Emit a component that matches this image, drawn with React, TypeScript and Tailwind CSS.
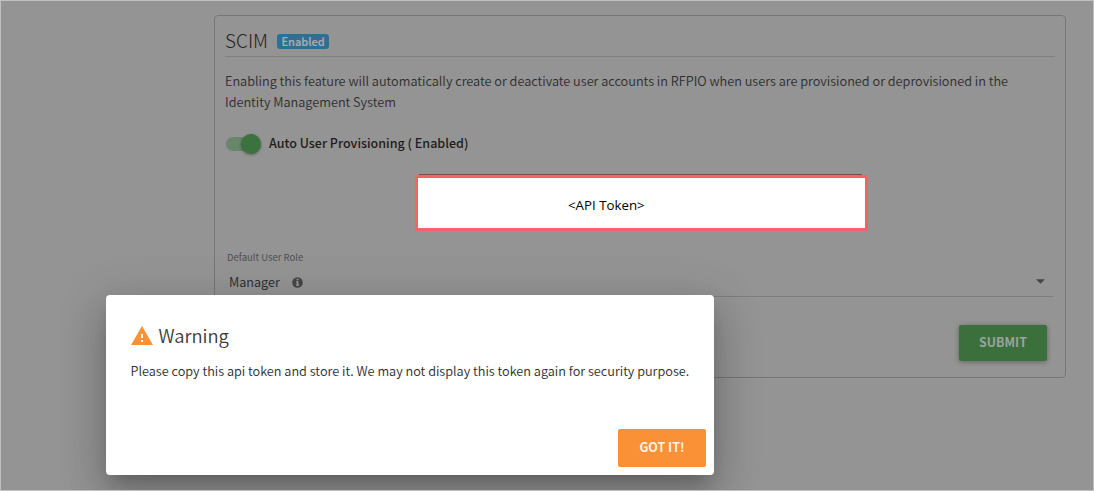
const BODY = "font-['Noto_Sans_CJK_SC','Noto_Sans',sans-serif]";

function Toggle() {
  return (
    <span className="relative ml-px block h-5 w-[35px] shrink-0">
      <span className="absolute left-0 top-[3px] h-[14px] w-[34px] rounded-full bg-[#68866a]" />
      <span className="absolute left-[15px] top-0 size-5 rounded-full bg-[#3b723d] shadow-[0_1px_3px_rgba(0,0,0,0.35)]" />
    </span>
  );
}

function InfoIcon() {
  return (
    <svg className="size-[11px]" viewBox="0 0 11 11">
      <circle cx="5.5" cy="5.5" r="5.3" fill="#464646" />
      <path d="M4.7 1.8h1.7v1.5H4.7zM4 4.3h2.4v3.5h.8v1H3.9v-1h.8V5.3H4z" fill="#a0a0a0" />
    </svg>
  );
}

function WarningIcon() {
  return (
    <svg className="h-[19px] w-[22px]" viewBox="1 2 22 19">
      <path d="M1 21h22L12 2 1 21zm12-3h-2v-2h2v2zm0-4h-2v-4h2v4z" fill="#fb9137" />
    </svg>
  );
}

function ScimCard() {
  return (
    <section className="ml-[213px] mt-[14px] flex h-[363px] w-[852px] flex-col rounded-[4px] border border-[#757777] px-[10px]">
      <header className="flex h-[41px] w-[830px] items-start border-b border-[#808080]">
        <h1 className="mt-[10px] h-7 w-[52px] whitespace-nowrap text-[19px] font-light leading-7 text-[#242424]">SCIM</h1>
        <span className="mt-[18px] flex h-[15px] w-[52px] items-center justify-center rounded-[3px] bg-[#306f94] text-[11px] font-medium leading-[15px] text-[#a9adaf] [-webkit-text-stroke:0.2px_#a9adaf]">
          Enabled
        </span>
      </header>
      <p className="mt-[13px] h-[42px] whitespace-nowrap text-[12.71px] font-[350] leading-[21px] text-[#2e2e2e]">
        Enabling this feature will automatically create or deactivate user accounts in RFPIO when users are provisioned or deprovisioned in the
        <br />
        Identity Management System
      </p>
      <div className="mt-[22px] flex h-5 items-center">
        <Toggle />
        <span className="-mt-[2px] ml-[8px] whitespace-nowrap text-[12.53px] font-medium leading-5 text-[#1d1d1d]">Auto User Provisioning ( Enabled)</span>
      </div>
      <div className="ml-[190px] mt-[20px] w-[453px]">
        <div className="ml-1 mr-[6px] h-px bg-[#7b4a4c]" />
        <div className="h-14 border-[3px] border-[#f56269] bg-white pl-[150px] font-['Open_Sans','Noto_Sans',sans-serif] text-[13.3px] leading-[55px] text-black">
          &lt;API Token&gt;
        </div>
      </div>
      <div className="ml-[2px] mt-[16px] h-[50px] w-[826px] border-b border-[#7d7d7d]">
        <div className="h-5 text-[9.5px] leading-5 text-[#505050]">Default User Role</div>
        <div className="mt-[4px] flex h-[22px] items-center">
          <span className="ml-[2px] w-[63px] text-[12.6px] leading-[22px] text-[#303030]">Manager</span>
          <InfoIcon />
          <svg className="-mt-px ml-auto mr-[8px] h-[5px] w-[9px]" viewBox="0 0 10 5">
            <path d="M0 0h10L5 5z" fill="#464646" />
          </svg>
        </div>
      </div>
      <button className="ml-auto mr-2 mt-[28px] h-9 w-[88px] shrink-0 rounded-[2px] bg-[#3b703d] pb-px text-[12.4px] font-bold text-[#9ca39c] shadow-[0_1px_5px_rgba(0,0,0,0.35)]">
        SUBMIT
      </button>
    </section>
  );
}

function WarningDialog() {
  return (
    <div
      role="dialog"
      className="absolute left-[105px] top-[294px] flex h-[180px] w-[608px] flex-col rounded-[4px] bg-white pl-[24.5px] shadow-[0_11px_15px_-7px_rgba(0,0,0,0.2),0_24px_38px_3px_rgba(0,0,0,0.14),0_9px_46px_8px_rgba(0,0,0,0.12)]"
    >
      <div className="mt-[26px] flex h-7 items-center">
        <WarningIcon />
        <h2 className="ml-[6px] text-[18.4px] font-[350] leading-7 text-[#3c3c3c]">Warning</h2>
      </div>
      <p className="mt-[12px] whitespace-nowrap text-[12.71px] font-[350] leading-5 text-[#2e2e2e]">
        Please copy this api token and store it. We may not display this token again for security purpose.
      </p>
      <button className="mb-2 ml-auto mr-2 mt-auto h-[38px] w-[88px] rounded-[2px] bg-[#fb9137] pb-px text-[12.4px] font-bold text-[#fff3e8]">
        GOT IT!
      </button>
    </div>
  );
}

export default function App() {
  return (
    <div className={`relative flex h-[491px] w-[1094px] items-start overflow-hidden border border-[#bfc0bf] bg-[#949494] ${BODY}`}>
      <ScimCard />
      <WarningDialog />
    </div>
  );
}
